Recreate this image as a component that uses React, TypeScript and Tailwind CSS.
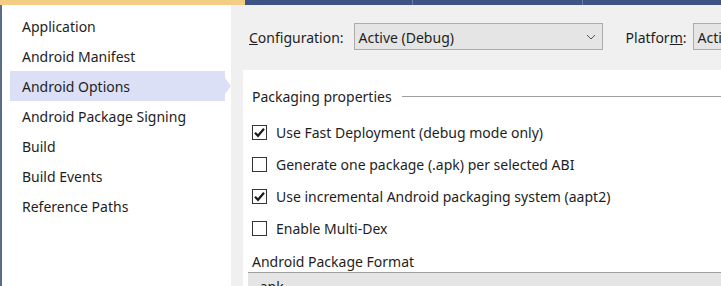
const font = "font-['Segoe_UI','Noto_Sans',sans-serif]"

const items = [
  "Application",
  "Android Manifest",
  "Android Options",
  "Android Package Signing",
  "Build",
  "Build Events",
  "Reference Paths",
]

const Check = ({ checked, label }: { checked: boolean; label: string }) => (
  <div className="flex items-center h-[32px]">
    <div className="w-[15px] h-[15px] border border-[#333333] bg-white flex items-center justify-center">
      {checked && (
        <svg width="13" height="13" viewBox="0 0 13 13">
          <path d="M2 6.8 L5 9.8 L11 2.8" fill="none" stroke="#1a1a1a" strokeWidth="2.2" />
        </svg>
      )}
    </div>
    <span className="ml-[9px]">{label}</span>
  </div>
)

const Chevron = () => (
  <svg width="10" height="6" viewBox="0 0 10 6">
    <path d="M1 1 L5 5 L9 1" fill="none" stroke="#555555" strokeWidth="1" />
  </svg>
)

export default function App() {
  return (
    <div className={`w-[721px] h-[286px] overflow-hidden flex flex-col bg-[#f0f0f0] text-[14px] text-[#1e1e1e] ${font}`}>
      <div className="flex h-[5px] shrink-0">
        <div className="w-[245px] bg-[#f5cc84]"></div>
        <div className="w-[168px] bg-[#3d5385] border-r border-[#6a7aa0]"></div>
        <div className="w-[170px] bg-[#3d5385] border-r border-[#6a7aa0]"></div>
        <div className="flex-1 bg-[#3d5385]"></div>
      </div>
      <div className="flex flex-1 min-h-0">
        <div className="w-[2px] bg-[#5b6b8c] shrink-0"></div>
        <div className="w-[229px] bg-white shrink-0 pt-[6px]">
          {items.map((it) => (
            <div key={it} className="relative h-[30px] flex items-center">
              {it === "Android Options" && (
                <>
                  <div className="absolute left-[8px] right-[6px] top-0 bottom-0 bg-[#dce0f6]"></div>
                  <div className="absolute right-0 top-[7px] w-0 h-0 border-y-[8px] border-y-transparent border-l-[6px] border-l-[#dce0f6]"></div>
                </>
              )}
              <span className="relative pl-[20px]">{it}</span>
            </div>
          ))}
        </div>
        <div className="flex-1 flex flex-col min-w-0">
          <div className="flex items-center h-[27px] mt-[18px] pl-[18px] whitespace-nowrap">
            <span className="pt-[2px]">
              <span className="underline">C</span>onfiguration:
            </span>
            <div className="ml-[10px] w-[249px] h-[27px] shrink-0 bg-[#e5e5e5] border border-[#acacac] flex items-center justify-between pl-[4px] pr-[6px]">
              <span className="pt-[2px]">Active (Debug)</span>
              <Chevron />
            </div>
            <span className="ml-[23px] pt-[2px]">
              Platfor<span className="underline">m</span>:
            </span>
            <div className="ml-[6px] w-[120px] h-[27px] shrink-0 bg-[#e5e5e5] border border-[#acacac] flex items-center pl-[4px]">
              <span className="pt-[2px]">Active (Any CPU)</span>
            </div>
          </div>
          <div className="ml-[15px] mt-[15px] h-px bg-[#a0a0a0]"></div>
          <div className="ml-[12px] mt-[5px] flex-1 bg-white pl-[9px] pt-[14px] flex flex-col">
            <div className="flex items-center h-[24px]">
              <span>Packaging properties</span>
              <div className="flex-1 h-px bg-[#a0a0a0] ml-[10px]"></div>
            </div>
            <div className="mt-[8px] flex flex-col">
              <Check checked label="Use Fast Deployment (debug mode only)" />
              <Check checked={false} label="Generate one package (.apk) per selected ABI" />
              <Check checked label="Use incremental Android packaging system (aapt2)" />
              <Check checked={false} label="Enable Multi-Dex" />
            </div>
            <div className="h-[22px] flex items-center mt-[6px]">Android Package Format</div>
            <div className="-ml-[4px] h-[27px] bg-[#e5e5e5] border-t border-[#a0a0a0] pl-[8px] flex items-center">
              .apk
            </div>
          </div>
        </div>
      </div>
    </div>
  )
}
